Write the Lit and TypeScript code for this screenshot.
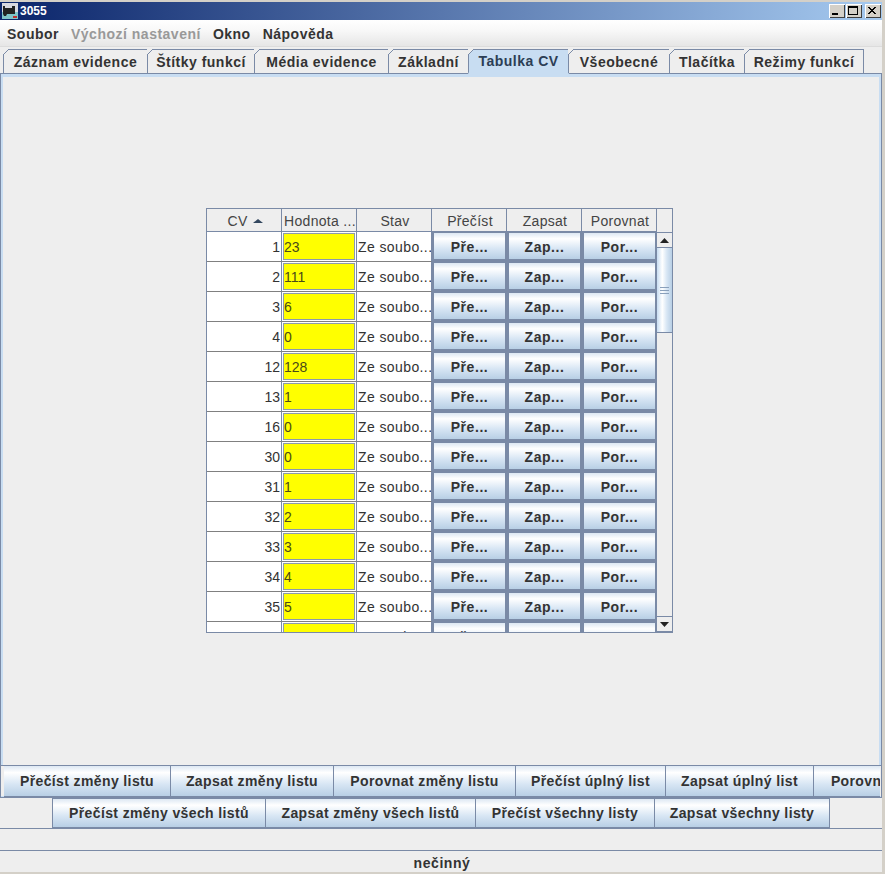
import { LitElement, html, css } from "lit";
import { customElement } from "lit/decorators.js";

const TABS: [string, number][] = [
  ["Záznam evidence", 144], ["Štítky funkcí", 107], ["Média evidence", 134], ["Základní", 80],
  ["Tabulka CV", 100], ["Všeobecné", 101], ["Tlačítka", 75], ["Režimy funkcí", 119],
];
const ROW1: [string, number][] = [
  ["Přečíst změny listu", 167], ["Zapsat změny listu", 163], ["Porovnat změny listu", 182],
  ["Přečíst úplný list", 150], ["Zapsat úplný list", 148], ["Porovnat úplný list", 168],
];
const ROW2: [string, number][] = [
  ["Přečíst změny všech listů", 214], ["Zapsat změny všech listů", 210],
  ["Přečíst všechny listy", 179], ["Zapsat všechny listy", 175],
];
const ROWS: [number, number][] = [
  [1, 23], [2, 111], [3, 6], [4, 0], [12, 128], [13, 1], [16, 0], [30, 0], [31, 1], [32, 2], [33, 3], [34, 4], [35, 5], [36, 6],
];

@customElement("app-root")
export class AppRoot extends LitElement {
  static styles = css`
    :host { display: block; width: 885px; height: 874px; overflow: hidden; background: #eeeeee; font-family: "Liberation Sans", Arial, sans-serif; color: #333; }
    .window { width: 882px; height: 872px; padding-top: 2px; box-sizing: border-box; display: flex; flex-direction: column; background: #eee; position: relative; }
    .edge { position: absolute; left: 882px; top: 0; width: 3px; height: 874px; background: #d4d0c8; }
    .topline { position: absolute; left: 0; top: 0; width: 885px; height: 2px; background: #d4d0c8; }
    .bottom { height: 2px; width: 885px; background: #d4d0c8; }
    .title { height: 18px; flex: none; display: flex; align-items: center; padding: 0 1px 0 2px; background: linear-gradient(90deg, #0a246a, #a6caf0); color: #fff; font: bold 12px "Liberation Sans", sans-serif; }
    .title svg { flex: none; margin-right: 2px; }
    .title .caption { flex: 1; }
    .ctl { width: 16px; height: 14px; margin-left: 1px; background: #d4d0c8; box-shadow: inset 1px 1px 0 #fff, inset -1px -1px 0 #404040; display: flex; align-items: center; justify-content: center; flex: none; }
    .ctl + .ctl.close { margin-left: 3px; }
    .menu { height: 27px; flex: none; box-sizing: border-box; border-bottom: 1px solid #dcdcdc; display: flex; align-items: center; padding: 1px 0 0 7px; gap: 12px; background: linear-gradient(#ffffff, #f8f8f8 40%, #e6e6e6); font-weight: bold; font-size: 14px; letter-spacing: 0.5px; color: #333; }
    .menu .off { color: #999; }
    .tabs { height: 24px; flex: none; margin-top: 2px; display: flex; padding-left: 3px; position: relative; z-index: 1; }
    .tab { position: relative; box-sizing: border-box; height: 24px; border: 1px solid #7a8aa6; border-bottom: none; background: #eeeeee; display: flex; justify-content: center; align-items: center; font-weight: bold; font-size: 14px; letter-spacing: 0.5px; color: #333; margin-right: -1px; }
    .tab::before { content: ""; position: absolute; left: -1px; top: -1px; width: 6px; height: 6px; background: linear-gradient(135deg, #eeeeee 0 46%, #7a8aa6 46% 58%, transparent 58%); }
    .tab.sel { background: #c8ddf2; height: 25px; border-bottom: 2px solid #c8ddf2; color: #2c3e55; }
    .panel { flex: none; height: 693px; box-sizing: border-box; border: 1px solid #7a8aa6; background: #eee; box-shadow: inset 0 3px 0 #c8ddf2, inset 2px 0 0 #c8ddf2, inset -2px 0 0 #c8ddf2; padding: 134px 0 0 205px; }
    .table { width: 467px; height: 425px; box-sizing: border-box; border: 1px solid #7a8aa6; display: grid; grid-template-columns: 450px 15px; overflow: hidden; background: #eee; }
    .cols { display: grid; grid-template-columns: repeat(6, 75px); grid-template-rows: 23px; grid-auto-rows: 30px; align-content: start; width: 450px; height: 423px; overflow: hidden; }
    .h { height: 23px; box-sizing: border-box; padding: 2px 0 0 2px; border-right: 1px solid #7a8aa6; border-bottom: 1px solid #7a8aa6; background: #eeeeee; font-size: 14px; letter-spacing: 0.3px; color: #444; white-space: nowrap; overflow: hidden; display: flex; align-items: center; justify-content: center; gap: 5px; }
    .arrow { width: 0; height: 0; border-left: 5px solid transparent; border-right: 5px solid transparent; border-bottom: 4px solid #33475f; }
    .c { height: 30px; box-sizing: border-box; border-right: 1px solid #7a8aa6; border-bottom: 1px solid #808080; background: #fff; font-size: 14px; letter-spacing: 0.4px; color: #333; display: flex; align-items: center; white-space: nowrap; overflow: hidden; }
    .cv { justify-content: flex-end; padding-right: 1px; letter-spacing: 0; }
    .val { padding: 1px; }
    .val span { display: flex; align-items: center; width: 100%; height: 100%; box-sizing: border-box; background: #ffff00; border: 1px solid #8c9aae; color: #4a4a18; letter-spacing: 0; }
    .st { padding-left: 1px; }
    .b { height: 30px; box-sizing: border-box; padding-top: 2px; border: solid #7a8aa6; border-width: 1px 2px 3px 2px; background: linear-gradient(#dde8f3, #fff 22%, #d8e6f4 60%, #b8cfe5); font-weight: bold; font-size: 14px; letter-spacing: 0.55px; color: #333; display: flex; align-items: center; justify-content: center; }
    .sb { width: 15px; display: flex; flex-direction: column; background: #eee; }
    .sb .top { height: 23px; flex: none; }
    .sbtn { height: 16px; flex: none; box-sizing: border-box; border: solid #7a8aa6; border-width: 1px 0; background: #eee; display: flex; align-items: center; justify-content: center; }
    .thumb { height: 85px; flex: none; box-sizing: border-box; border-bottom: 1px solid #7a8aa6; background: linear-gradient(90deg, #c8ddf2, #fff 35%, #d8e6f4 65%, #b8cfe5); display: flex; flex-direction: column; align-items: center; justify-content: center; gap: 2px; }
    .thumb i { display: block; width: 9px; height: 1px; background: #8aa0bb; }
    .track { flex: 1; background: #eee; }
    .wrap1 { height: 33px; flex: none; box-sizing: border-box; border: 1px solid #7a8aa6; border-top: none; margin-top: -1px; padding: 0 1px 0 3px; box-shadow: inset 0 -1px 0 #c8ddf2; }
    .row1 { height: 32px; display: flex; overflow: hidden; }
    .row2 { height: 30px; flex: none; display: flex; padding-left: 52px; border-bottom: 1px solid #7a8aa6; box-sizing: content-box; }
    .btn { flex: none; box-sizing: border-box; border: 1px solid #7a8aa6; border-left: none; background: linear-gradient(#dde8f3, #fff 22%, #d8e6f4 60%, #b8cfe5); font-weight: bold; font-size: 14px; letter-spacing: 0.38px; color: #333; display: flex; align-items: center; justify-content: center; white-space: nowrap; overflow: hidden; }
    .row2 .btn:first-child { border-left: 1px solid #7a8aa6; }
    .empty { height: 21px; flex: none; border-bottom: 1px solid #7a8aa6; background: #eee; }
    .status { flex: 1; display: flex; align-items: center; justify-content: center; padding: 2px 0 0 2px; font-weight: bold; font-size: 14px; letter-spacing: 0.55px; color: #333; }
  `;

  render() {
    return html`
      <div class="window">
        <div class="topline"></div>
        <div class="title">
          <svg width="16" height="16" viewBox="0 0 16 16">
            <rect width="16" height="16" fill="#d8d8e0"/>
            <rect y="9" width="16" height="7" fill="#7fc4c8"/>
            <path d="M1 3h2v2h7V3h3v8H5l-1 2H2l-1-2z" fill="#222"/>
            <rect x="11" y="13" width="4" height="2" fill="#c03030"/>
          </svg>
          <span class="caption">3055</span>
          <span class="ctl"><svg width="10" height="10"><rect x="1" y="7" width="6" height="2" fill="#000"/></svg></span>
          <span class="ctl"><svg width="10" height="10"><rect x="0.5" y="0.5" width="9" height="8" fill="none" stroke="#000"/><rect x="0" y="0" width="10" height="2" fill="#000"/></svg></span>
          <span class="ctl close"><svg width="10" height="10"><path d="M1 1l7 7M2 1l7 7M8 1L1 8M9 1L2 8" stroke="#000" fill="none"/></svg></span>
        </div>
        <div class="menu"><span>Soubor</span><span class="off">Výchozí nastavení</span><span>Okno</span><span>Nápověda</span></div>
        <div class="tabs">
          ${TABS.map(([t, w], i) => html`<div class="tab ${i === 4 ? "sel" : ""}" style="width:${w + 1}px">${t}</div>`)}
        </div>
        <div class="panel">
          <div class="table">
            <div class="cols">
              <div class="h">CV <span class="arrow"></span></div>
              <div class="h">Hodnota ...</div>
              <div class="h">Stav</div>
              <div class="h">Přečíst</div>
              <div class="h">Zapsat</div>
              <div class="h">Porovnat</div>
              ${ROWS.map(([cv, v]) => html`
                <div class="c cv">${cv}</div>
                <div class="c val"><span>${v}</span></div>
                <div class="c st">Ze soubo...</div>
                <div class="b">Pře...</div>
                <div class="b">Zap...</div>
                <div class="b">Por...</div>
              `)}
            </div>
            <div class="sb">
              <div class="top"></div>
              <div class="sbtn"><svg width="9" height="5"><path d="M4.5 0L9 5H0z" fill="#222"/></svg></div>
              <div class="thumb"><i></i><i></i><i></i></div>
              <div class="track"></div>
              <div class="sbtn"><svg width="9" height="5"><path d="M0 0h9L4.5 5z" fill="#222"/></svg></div>
            </div>
          </div>
        </div>
        <div class="wrap1">
          <div class="row1">
            ${ROW1.map(([t, w]) => html`<div class="btn" style="width:${w}px">${t}</div>`)}
          </div>
        </div>
        <div class="row2">
          ${ROW2.map(([t, w]) => html`<div class="btn" style="width:${w}px">${t}</div>`)}
        </div>
        <div class="empty"></div>
        <div class="status">nečinný</div>
        <div class="edge"></div>
      </div>
      <div class="bottom"></div>
    `;
  }
}
